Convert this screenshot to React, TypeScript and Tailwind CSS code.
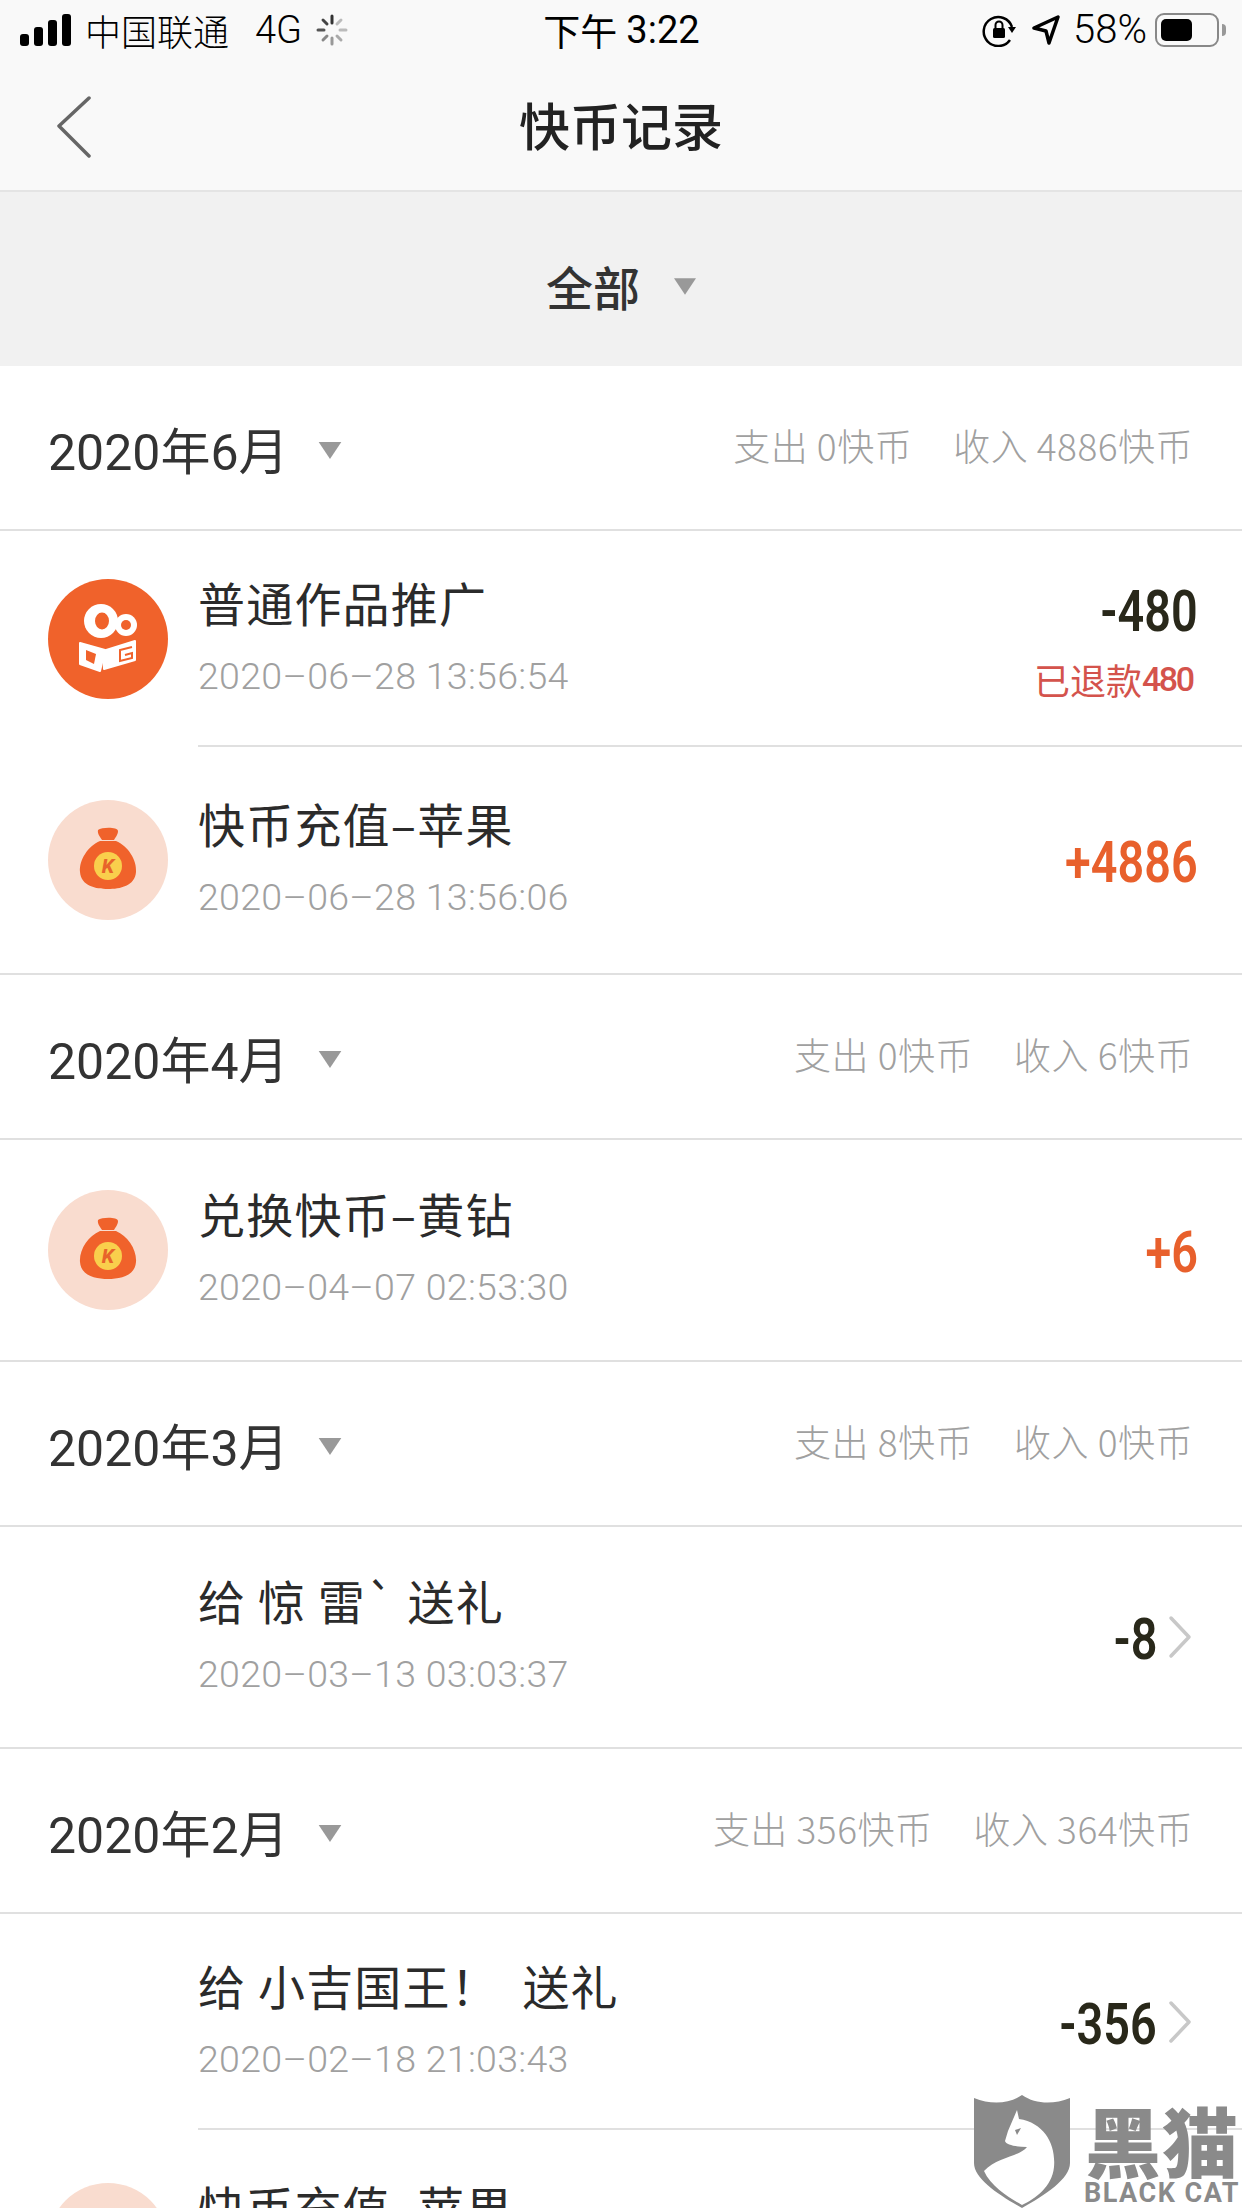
const cjk = { fontFamily: '"Noto Sans CJK SC", "Noto Sans", sans-serif' };

type Item = {
  title: string;
  time: string;
  amount: string;
  icon?: 'logo' | 'bag';
  income?: boolean;
  refund?: string;
  arrow?: boolean;
  divider?: boolean;
  h: string;
};

type Group = {
  month: string;
  out: string;
  inc: string;
  items: Item[];
};

const groups: Group[] = [
  {
    month: '2020年6月',
    out: '支出 0快币',
    inc: '收入 4886快币',
    items: [
      { title: '普通作品推广', time: '2020–06–28 13:56:54', amount: '-480', icon: 'logo', refund: '480', divider: true, h: 'h-[216px]' },
      { title: '快币充值–苹果', time: '2020–06–28 13:56:06', amount: '+4886', icon: 'bag', income: true, h: 'h-[228px]' },
    ],
  },
  {
    month: '2020年4月',
    out: '支出 0快币',
    inc: '收入 6快币',
    items: [{ title: '兑换快币–黄钻', time: '2020–04–07 02:53:30', amount: '+6', icon: 'bag', income: true, h: 'h-[222px]' }],
  },
  {
    month: '2020年3月',
    out: '支出 8快币',
    inc: '收入 0快币',
    items: [{ title: '给 惊 雷` 送礼', time: '2020–03–13 03:03:37', amount: '-8', arrow: true, h: 'h-[222px]' }],
  },
  {
    month: '2020年2月',
    out: '支出 356快币',
    inc: '收入 364快币',
    items: [
      { title: '给 小吉国王！  送礼', time: '2020–02–18 21:03:43', amount: '-356', arrow: true, divider: true, h: 'h-[216px]' },
      { title: '快币充值–苹果', time: '2020–02–18 21:02:10', amount: '+364', icon: 'bag', income: true, h: 'h-[228px]' },
    ],
  },
];

function Triangle({ className }: { className: string }) {
  return (
    <svg viewBox="0 0 24 18" className={className}>
      <path d="M0 0H24L12 18Z" fill="#999" />
    </svg>
  );
}

function LogoIcon() {
  return (
    <div className="w-[120px] h-[120px] rounded-full bg-[#f0622b] shrink-0">
      <svg viewBox="0 0 120 120" className="w-[120px] h-[120px]">
        <circle cx="53" cy="42" r="17" fill="#fff" />
        <circle cx="78" cy="46" r="11" fill="#fff" />
        <ellipse cx="54" cy="42" rx="7" ry="8.500" fill="#f0622b" />
        <circle cx="78" cy="46" r="5" fill="#f0622b" />
        <path d="M32 64L57 71L52 92L32 85Z" fill="#fff" stroke="#fff" strokeWidth="2" strokeLinejoin="round" />
        <path d="M38 71L48 75L46 85L38 81Z" fill="#f0622b" />
        <path d="M55 72L87 62V81L56 90Z" fill="#fff" stroke="#fff" strokeWidth="2" strokeLinejoin="round" />
        <path d="M84 68L72 71V82L84 79V74L77 76" fill="none" stroke="#f0622b" strokeWidth="2" />
      </svg>
    </div>
  );
}

function BagIcon() {
  return (
    <div className="w-[120px] h-[120px] rounded-full bg-[#f9dccf] shrink-0">
      <svg viewBox="0 0 120 120" className="w-[120px] h-[120px]">
        <path d="M50 30C54 27 70 27 70 31C70 35 67 38 66 40H54C53 38 49 34 50 30Z" fill="#f0622b" />
        <path d="M52 41H68C80 46 89 60 88 72C87 86 72 89 60 89C48 89 33 86 32 72C31 60 40 46 52 41Z" fill="#f0622b" />
        <circle cx="60" cy="66" r="14" fill="#f9cf4c" />
        <text x="60" y="73" textAnchor="middle" fontSize="20" fontWeight="800" fontStyle="italic" fill="#e8642a" fontFamily="Roboto, sans-serif">K</text>
      </svg>
    </div>
  );
}

function Row({ item, last }: { item: Item; last: boolean }) {
  return (
    <div className={`relative flex items-center pl-12 bg-white ${item.h} ${last ? 'border-b-2 border-[#e0e0e0]' : ''}`}>
      <div className="w-[120px] h-[120px] shrink-0">
        {item.icon === 'logo' && <LogoIcon />}
        {item.icon === 'bag' && <BagIcon />}
      </div>
      <div className="ml-[30px] pb-[9px] flex-1 flex flex-col">
        <div className="text-[47px] leading-[60px] text-[#2b2b2b] tracking-[1.2px] whitespace-pre" style={cjk}>{item.title}</div>
        <div className="mt-[23px] text-[37.500px] leading-[42px] text-[#a0a0a0] tracking-[0.3px] font-['Roboto',sans-serif] font-light">{item.time}</div>
      </div>
      <div className={`flex flex-col items-end ${item.arrow ? 'pr-[85px]' : 'pr-[44px]'} ${item.refund ? 'pt-[3px]' : 'pt-[5px]'}`}>
        <div className={`origin-right scale-x-[0.82] text-[57px] leading-[60px] font-semibold font-['Roboto',sans-serif] ${item.income ? 'text-[#e8602c]' : 'text-[#29281a]'}`}>{item.amount}</div>
        {item.refund && (
          <div className="mt-[17px] flex items-center pr-[6px] text-[36px] leading-[40px] text-[#d4534c]" style={cjk}>
            已退款<span className="font-['Roboto',sans-serif] font-medium w-[50px] text-right text-[34px] tracking-[-2.500px]">{item.refund}</span>
          </div>
        )}
      </div>
      {item.arrow && (
        <svg viewBox="0 0 24 44" className="absolute right-[50px] top-1/2 -translate-y-1/2 w-[24px] h-[44px]" fill="none" stroke="#c8c8c8" strokeWidth="3.500" strokeLinecap="round" strokeLinejoin="round">
          <path d="M3 3L21 22L3 41" />
        </svg>
      )}
      {item.divider && <div className="absolute left-[198px] right-0 bottom-0 h-[2px] bg-[#e0e0e0]" />}
    </div>
  );
}

function StatusBar() {
  return (
    <div className="h-[60px] flex items-center justify-between pl-5 pr-4 text-black" style={cjk}>
      <div className="flex-1 flex items-center">
        <svg viewBox="0 0 52 32" className="w-[52px] h-[32px]">
          <rect x="0" y="20" width="9" height="12" rx="3" />
          <rect x="14" y="13" width="9" height="19" rx="3" />
          <rect x="28" y="6" width="9" height="26" rx="3" />
          <rect x="42" y="0" width="9" height="32" rx="3" />
        </svg>
        <span className="ml-[13px] text-[36px] leading-[44px] font-light">中国联通</span>
        <span className="ml-[26px] text-[38px] leading-[44px] font-['Roboto',sans-serif] font-light">4G</span>
        <svg viewBox="0 0 32 32" className="ml-[14px] w-[32px] h-[32px]" stroke="#777" strokeWidth="3" strokeLinecap="round">
          <path d="M16 2V9" stroke="#333" />
          <path d="M25 6L21 10" stroke="#bbb" />
          <path d="M30 16H24" stroke="#bbb" />
          <path d="M25 26L21 22" stroke="#aaa" />
          <path d="M16 30V24" stroke="#999" />
          <path d="M7 26L11 22" stroke="#888" />
          <path d="M2 16H8" stroke="#555" />
          <path d="M7 6L11 10" stroke="#444" />
        </svg>
      </div>
      <div className="flex items-center text-[37px] leading-[44px] -ml-[3px]">下午<span className="ml-[9px] text-[38px] font-['Roboto',sans-serif]">3:22</span></div>
      <div className="flex-1 flex items-center justify-end">
        <svg viewBox="0 0 34 34" className="w-[34px] h-[34px]" fill="none" stroke="#000" strokeWidth="2.500">
          <path d="M30 14A14.500 14.500 0 1 0 28 27" />
          <path d="M26 14L34 14L30 20Z" fill="#000" stroke="none" />
          <rect x="11" y="15" width="12" height="10" rx="1.500" fill="#000" stroke="none" />
          <path d="M13.500 15V12A3.500 3.500 0 0 1 20.500 12V15" strokeWidth="2" />
        </svg>
        <svg viewBox="0 0 28 32" className="ml-[16px] w-[28px] h-[32px]" fill="none" stroke="#000" strokeWidth="3.500" strokeLinejoin="round">
          <path d="M2 14L26 3L17 29L14 17Z" />
        </svg>
        <span className="ml-[13px] text-[40px] leading-[44px] font-['Roboto',sans-serif] font-light">58%</span>
        <div className="ml-[8px] w-[64px] h-[34px] border-[2px] border-[#888] rounded-[9px] p-[4px] flex">
          <div className="w-[31px] bg-black rounded-[5px]" />
        </div>
        <div className="ml-[3px] w-[4px] h-[12px] bg-[#999] rounded-r-full" />
      </div>
    </div>
  );
}

function Watermark() {
  return (
    <div className="absolute left-[973px] top-[2095px] flex items-start text-[#8a8a8a]">
      <svg viewBox="0 0 98 113" className="w-[98px] h-[113px]">
        <path d="M1 3C18 10 36 9 49 0C62 9 80 10 97 3V68C97 84 72 100 49 113C26 100 1 84 1 68Z" fill="#8a8a8a" />
        <path d="M44 15L46 24C72 28 83 50 81 72C79 92 62 104 49 110C38 104 18 92 11 76C24 62 46 62 54 52C44 52 33 50 32 46L35 36Z" fill="#fff" />
        <path d="M42 35L48 33L44 40Z" fill="#8a8a8a" />
      </svg>
      <div className="ml-[13px] mt-[6px] flex flex-col items-center">
        <div className="text-[76px] leading-[76px] font-black tracking-[1px]" style={cjk}>黑猫</div>
        <div className="mt-[2px] text-[27px] leading-[28px] font-bold tracking-[1.5px] font-['Roboto',sans-serif] whitespace-nowrap">BLACK CAT</div>
      </div>
    </div>
  );
}

export default function App() {
  return (
    <div className="relative w-[1242px] h-[2208px] overflow-hidden bg-white" style={cjk}>
      <div className="h-[192px] bg-[#f9f9f9] border-b-2 border-[#e4e4e4]">
        <StatusBar />
        <div className="relative h-[130px] flex items-center justify-center">
          <svg viewBox="0 0 34 62" className="absolute left-[57px] top-[36px] w-[34px] h-[62px]" fill="none" stroke="#666" strokeWidth="3.500" strokeLinecap="round" strokeLinejoin="round">
            <path d="M32 2L2 30L32 60" />
          </svg>
          <span className="text-[51px] leading-[60px] text-[#222] font-medium -mt-[2px]">快币记录</span>
        </div>
      </div>
      <div className="h-[174px] pt-[14px] bg-[#f1f1f1] flex items-center justify-center">
        <span className="text-[47px] leading-[56px] text-[#333] font-medium">全部</span>
        <Triangle className="ml-[34px] w-[22px] h-[17px]" />
      </div>
      {groups.map((group) => (
        <div key={group.month}>
          <div className="h-[165px] flex items-center justify-between pl-12 pr-[49px] border-b-2 border-[#e0e0e0] bg-white">
            <div className="flex items-center pt-[6px]">
              <span className="text-[50px] leading-[56px] text-[#333]">
                <span className="font-['Roboto',sans-serif]">{group.month.slice(0, 4)}</span>年<span className="font-['Roboto',sans-serif]">{group.month.slice(5, 6)}</span>月
              </span>
              <Triangle className="ml-[29px] w-[24px] h-[17px]" />
            </div>
            <div className="flex gap-[41px] -mt-[6px] text-[37px] leading-[44px] text-[#a0a0a0] font-light tracking-[0.5px]">
              <span>{group.out}</span>
              <span>{group.inc}</span>
            </div>
          </div>
          {group.items.map((item, i) => (
            <Row key={item.time} item={item} last={i === group.items.length - 1} />
          ))}
        </div>
      ))}
      <Watermark />
    </div>
  );
}
